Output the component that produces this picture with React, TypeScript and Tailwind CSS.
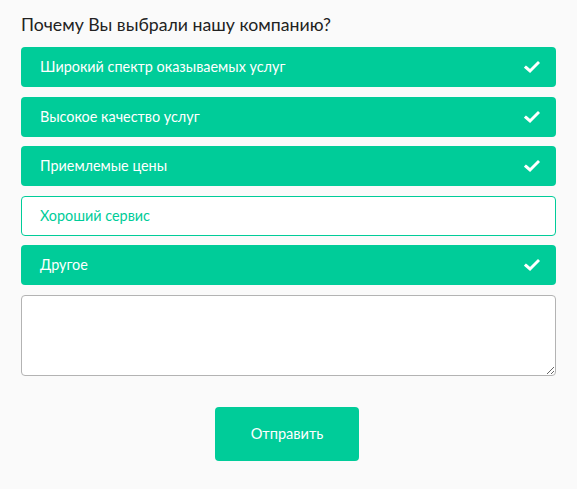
import React from "react";

const items = [
  { label: "Широкий спектр оказываемых услуг", checked: true },
  { label: "Высокое качество услуг", checked: true },
  { label: "Приемлемые цены", checked: true },
  { label: "Хороший сервис", checked: false },
  { label: "Другое", checked: true },
];

function Check() {
  return (
    <svg width="16" height="14" viewBox="0 0 16 14" fill="none">
      <path d="M2 7.5 L6 11 L14 3" stroke="white" strokeWidth="3" strokeLinecap="square" />
    </svg>
  );
}

export default function App() {
  return (
    <div
      className="w-[577px] h-[489px] bg-[#fafafa] px-[21px] pt-[13px]"
      style={{ fontFamily: 'Lato, "Noto Sans", sans-serif' }}
    >
      <h2 className="text-[17.7px] leading-[24px] text-[#222] mb-[10px]">Почему Вы выбрали нашу компанию?</h2>
      <div className="flex flex-col gap-[9.5px]">
        {items.map((it) =>
          it.checked ? (
            <div
              key={it.label}
              className="h-[40px] rounded-[4px] bg-[#00cc99] flex items-center justify-between pl-[19px] pr-[16px] text-white text-[14.4px]"
            >
              <span>{it.label}</span>
              <Check />
            </div>
          ) : (
            <div
              key={it.label}
              className="h-[40px] rounded-[4px] bg-white border border-[#00cc99] flex items-center pl-[18px] text-[#00cc99] text-[14.4px]"
            >
              <span>{it.label}</span>
            </div>
          )
        )}
        <textarea className="h-[81px] rounded-[4px] bg-white border border-[#b3b3b3] resize-y outline-none" />
      </div>
      <div className="flex mt-[31px] pl-[194px]">
        <button className="w-[144px] h-[54px] rounded-[4px] bg-[#00cc99] text-white text-[14.6px]">Отправить</button>
      </div>
    </div>
  );
}
